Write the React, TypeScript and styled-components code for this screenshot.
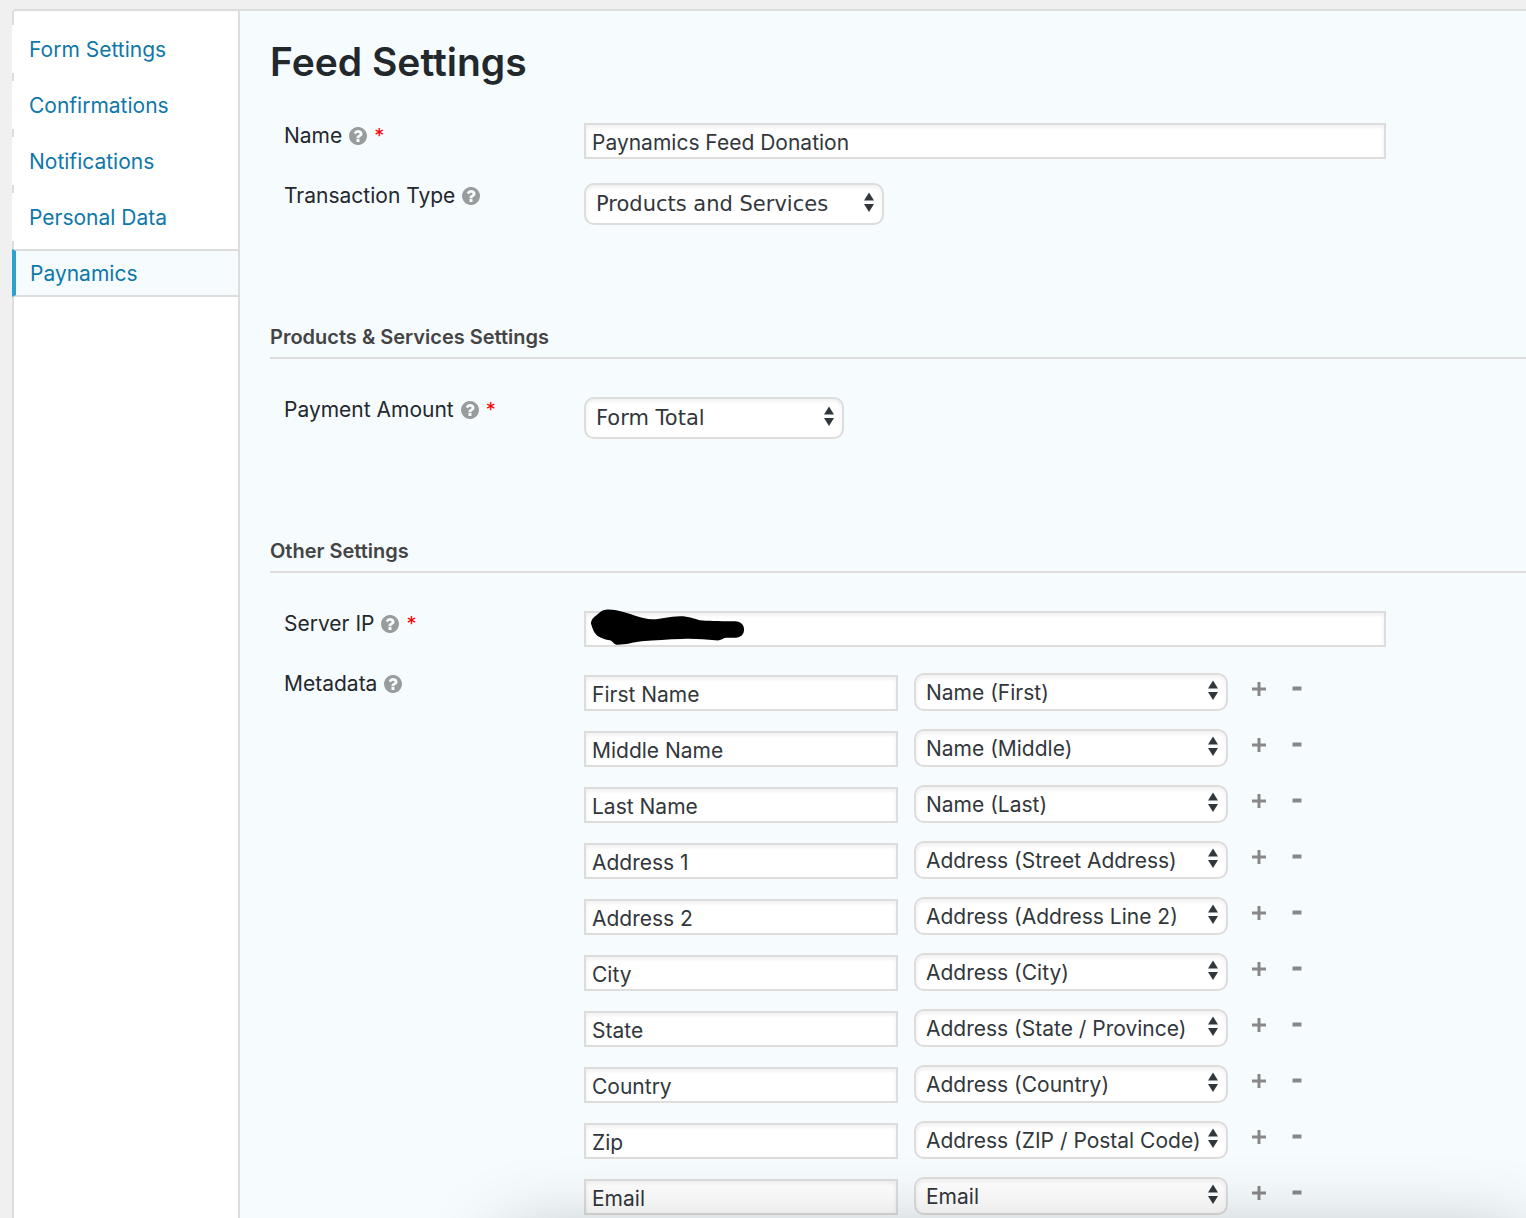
import React from "react";
import styled, { createGlobalStyle } from "styled-components";

const GlobalStyle = createGlobalStyle`
  *, *::before, *::after { box-sizing: border-box; }
  body {
    margin: 0;
    background: #f0f0f0;
    color: #23282d;
    font-family: Inter, "Open Sans", sans-serif;
    font-size: 21px;
    line-height: 26px;
  }
`;

const Page = styled.div`
  min-height: 100vh;
  padding: 9px 0 0 12px;
  display: flex;
  overflow: hidden;
`;

const Panel = styled.div`
  flex: 1;
  min-width: 0;
  display: flex;
  border: solid #dddddd;
  border-width: 2px 0 0 2px;
  border-top-left-radius: 4px;
  background: #f6fbfe;
`;

const Sidebar = styled.nav`
  flex: 0 0 226px;
  display: flex;
  flex-direction: column;
  gap: 8px;
  padding-top: 14px;
  background: #ffffff;
  border-right: 2px solid #dddddd;
  border-top-left-radius: 2px;
`;

const Tab = styled.a<{ $active?: boolean }>`
  display: flex;
  align-items: center;
  height: 48px;
  margin-left: -2px;
  padding-top: 2px;
  padding-left: ${(p) => (p.$active ? 14 : 17)}px;
  color: #0f77aa;
  text-decoration: none;
  background: ${(p) => (p.$active ? "#f6fbfe" : "#ffffff")};
  border: solid #dddddd;
  border-width: ${(p) => (p.$active ? "2px 0" : "0")};
  border-left: ${(p) => (p.$active ? "4px solid #2ea2cc" : "0")};
`;

const Content = styled.main`
  flex: 1;
  min-width: 0;
  padding: 29px 0 3px 30px;
`;

const Title = styled.h1`
  margin: 0 0 39px;
  font-size: 39px;
  line-height: 44px;
  font-weight: 600;
`;

const Section = styled.section`
  display: flex;
  flex-direction: column;
  gap: 24px;
  & + & { margin-top: 99px; }
`;

const SectionTitle = styled.h2`
  margin: 0 0 14px;
  padding-bottom: 7px;
  border-bottom: 2px solid #dddddd;
  color: #444444;
  font-size: 20px;
  line-height: 26px;
  font-weight: 600;
`;

const Row = styled.div`
  display: grid;
  grid-template-columns: 300px minmax(0, 802px);
  align-items: start;
  padding: 0 14px;
`;

const LabelCell = styled.div`
  display: flex;
  align-items: center;
  gap: 7px;
`;

const HelpButton = styled.button`
  display: flex;
  padding: 0;
  border: 0;
  background: none;
  color: #999c9d;
`;

const Required = styled.span`
  color: #ff0000;
  font-size: 20px;
`;

const InputBox = styled.div`
  position: relative;
  display: flex;
`;

const TextInput = styled.input`
  width: 100%;
  min-width: 0;
  height: 36px;
  padding: 2px 6px 0;
  border: 2px solid #dddddd;
  border-radius: 0;
  background: #ffffff;
  box-shadow: inset 0 2px 4px rgba(0, 0, 0, 0.07);
  color: #32373c;
  font: inherit;
  outline: none;
`;

const Redaction = styled.svg`
  position: absolute;
  left: 6px;
  top: -3px;
`;

const SelectBox = styled.div<{ $width?: number }>`
  position: relative;
  display: flex;
  width: ${(p) => (p.$width ? `${p.$width}px` : "100%")};
`;

const Select = styled.select<{ $large?: boolean }>`
  appearance: none;
  width: 100%;
  height: ${(p) => (p.$large ? 42 : 38)}px;
  padding: 0 20px 0 10px;
  border: 2px solid #dddddd;
  border-radius: 10px;
  background: #ffffff;
  box-shadow: inset 0 2px 4px rgba(0, 0, 0, 0.07);
  color: #32373c;
  font-family: ${(p) => (p.$large ? '"DejaVu Sans", sans-serif' : "inherit")};
  font-size: 21px;
  outline: none;
`;

const Arrows = styled.svg<{ $large?: boolean }>`
  position: absolute;
  right: 10px;
  top: ${(p) => (p.$large ? 9 : 7)}px;
  pointer-events: none;
`;

const MapList = styled.div`
  display: flex;
  flex-direction: column;
  gap: 18px;
  padding-top: 2px;
`;

const MapRow = styled.div`
  display: grid;
  grid-template-columns: minmax(0, 314px) minmax(0, 314px) auto;
  column-gap: 16px;
  align-items: end;
`;

const Actions = styled.div`
  display: flex;
  align-self: start;
  gap: 14px;
  padding: 4px 0 0 3px;
`;

const IconButton = styled.button`
  display: flex;
  align-items: center;
  justify-content: center;
  width: 24px;
  height: 24px;
  padding: 0;
  border: 0;
  background: none;
  color: #888888;
`;

const BottomShade = styled.div`
  position: fixed;
  left: 505px;
  right: 0;
  bottom: -222px;
  height: 200px;
  border-radius: 10px;
  box-shadow: 0 0 80px rgba(0, 0, 0, 0.3);
  pointer-events: none;
`;

const tabs = ["Form Settings", "Confirmations", "Notifications", "Personal Data", "Paynamics"];

const metadata: [string, string][] = [
  ["First Name", "Name (First)"],
  ["Middle Name", "Name (Middle)"],
  ["Last Name", "Name (Last)"],
  ["Address 1", "Address (Street Address)"],
  ["Address 2", "Address (Address Line 2)"],
  ["City", "Address (City)"],
  ["State", "Address (State / Province)"],
  ["Country", "Address (Country)"],
  ["Zip", "Address (ZIP / Postal Code)"],
  ["Email", "Email"],
];

function HelpIcon() {
  return (
    <svg width="18" height="18" viewBox="128 128 1536 1536" fill="currentColor" aria-hidden="true">
      <path d="M1024 1376v-192q0-14-9-23t-23-9h-192q-14 0-23 9t-9 23v192q0 14 9 23t23 9h192q14 0 23-9t9-23zm256-672q0-88-55.5-163t-138.5-116-170-41q-243 0-371 213-15 24 8 42l132 100q7 6 19 6 16 0 25-12 53-68 86-92 34-24 86-24 48 0 85.5 26t37.5 59q0 38-20 61t-68 45q-63 28-115.5 86.5t-52.5 125.5v36q0 14 9 23t23 9h192q14 0 23-9t9-23q0-19 21.5-49.5t54.5-49.5q32-18 49-28.5t46-35 44.5-48 28-60.5 12.5-81zm384 192q0 209-103 385.5t-279.5 279.5-385.5 103-385.5-103-279.5-279.5-103-385.5 103-385.5 279.5-279.5 385.5-103 385.5 103 279.5 279.5 103 385.5z" />
    </svg>
  );
}

function FieldLabel({ text, htmlFor, required }: { text: string; htmlFor?: string; required?: boolean }) {
  return (
    <LabelCell>
      {htmlFor ? <label htmlFor={htmlFor}>{text}</label> : <span>{text}</span>}
      <HelpButton type="button" aria-label={`Help: ${text}`}>
        <HelpIcon />
      </HelpButton>
      {required && <Required>*</Required>}
    </LabelCell>
  );
}

function Dropdown(props: { value: string; id?: string; label?: string; width?: number; large?: boolean }) {
  return (
    <SelectBox $width={props.width}>
      <Select id={props.id} aria-label={props.label} $large={props.large} defaultValue={props.value}>
        <option>{props.value}</option>
      </Select>
      <Arrows $large={props.large} width="10" height="20" viewBox="0 0 10 20" fill="#32373c" aria-hidden="true">
        <path d="M5 0.5 10 8.5H0zM0 12h10L5 20z" />
      </Arrows>
    </SelectBox>
  );
}

export default function App() {
  return (
    <>
      <GlobalStyle />
      <Page>
        <Panel>
          <Sidebar>
            {tabs.map((tab) => (
              <Tab key={tab} href="#" $active={tab === "Paynamics"}>
                {tab}
              </Tab>
            ))}
          </Sidebar>
          <Content>
            <Title>Feed Settings</Title>
            <Section>
              <Row>
                <FieldLabel text="Name" htmlFor="feed-name" required />
                <InputBox>
                  <TextInput id="feed-name" defaultValue="Paynamics Feed Donation" />
                </InputBox>
              </Row>
              <Row>
                <FieldLabel text="Transaction Type" htmlFor="transaction-type" />
                <Dropdown id="transaction-type" value="Products and Services" width={300} large />
              </Row>
            </Section>
            <Section>
              <SectionTitle>Products &amp; Services Settings</SectionTitle>
              <Row>
                <FieldLabel text="Payment Amount" htmlFor="payment-amount" required />
                <Dropdown id="payment-amount" value="Form Total" width={260} large />
              </Row>
            </Section>
            <Section>
              <SectionTitle>Other Settings</SectionTitle>
              <Row>
                <FieldLabel text="Server IP" htmlFor="server-ip" required />
                <InputBox>
                  <TextInput id="server-ip" />
                  <Redaction width="155" height="38" viewBox="60 39 465 114" aria-hidden="true">
                    <path d="M63 86C63 73 72 66 81 59C91 51 95 45 108 44C128 43 145 47 163 52C190 59 216 72 246 73C272 74 296 64 330 64C358 64 374 72 390 76C410 78 440 79 495 79C513 79 522 90 522 104C522 118 512 127 497 128C486 129 474 127 463 129C455 135 447 137 435 136C405 133 370 130 335 132C295 133 255 136 215 139C185 143 165 150 139 149C130 147 129 139 120 136C105 133 95 131 82 122C71 113 68 101 63 86Z" />
                  </Redaction>
                </InputBox>
              </Row>
              <Row>
                <FieldLabel text="Metadata" />
                <MapList>
                  {metadata.map(([key, field]) => (
                    <MapRow key={key}>
                      <TextInput aria-label={`${key} key`} defaultValue={key} />
                      <Dropdown value={field} label={`${key} field`} />
                      <Actions>
                        <IconButton type="button" aria-label={`Add row after ${key}`}>
                          <svg width="14" height="14" viewBox="0 0 14 14" fill="currentColor" aria-hidden="true">
                            <path d="M5.5 0h3v5.5H14v3H8.5V14h-3V8.5H0v-3h5.5z" />
                          </svg>
                        </IconButton>
                        <IconButton type="button" aria-label={`Remove ${key}`}>
                          <svg width="14" height="14" viewBox="0 0 14 14" fill="currentColor" aria-hidden="true">
                            <path d="M2.5 4.500h9v4h-9z" />
                          </svg>
                        </IconButton>
                      </Actions>
                    </MapRow>
                  ))}
                </MapList>
              </Row>
            </Section>
          </Content>
        </Panel>
      </Page>
      <BottomShade />
    </>
  );
}
